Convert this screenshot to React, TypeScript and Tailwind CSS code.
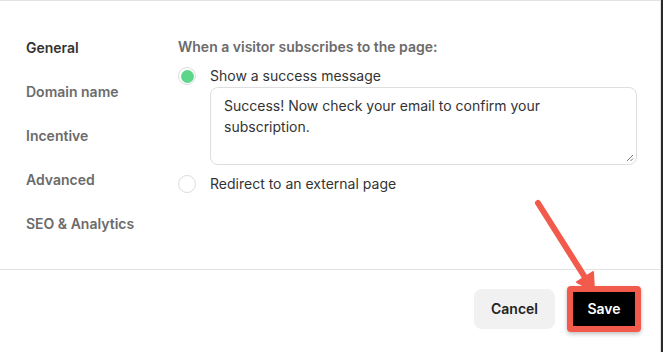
import React from 'react';

const NAV = ['General', 'Domain name', 'Incentive', 'Advanced', 'SEO & Analytics'];

export default function App() {
  return (
    <div
      className="relative flex h-[352px] w-[663px] overflow-hidden bg-white text-sm"
      style={{ fontFamily: 'Inter, "Noto Sans", sans-serif' }}
    >
      <div className="flex h-full w-[661px] flex-col border-r border-t border-[#e2e2e2]">
        {/* Body */}
        <div className="flex h-[269px] border-b border-[#e2e2e2]">
          <nav className="flex w-[178px] flex-col gap-6 pl-[26px] pt-[37px] font-semibold leading-5 text-[#6b6b6b]">
            {NAV.map((n, i) => (
              <span key={n} className={i === 0 ? 'text-[#333]' : ''}>
                {n}
              </span>
            ))}
          </nav>
          <div className="flex flex-col pt-[36px]">
            <p className="font-semibold leading-5 text-[#6b6b6b]">When a visitor subscribes to the page:</p>
            <label className="mt-[9px] flex items-center gap-[14px] leading-5 text-[#333]">
              <Radio checked />
              Show a success message
            </label>
            <div className="relative ml-[32px] mt-[1px] h-[78px] w-[427px] rounded-lg border border-[#dedede] bg-white">
              <p className="px-[13px] pt-[7px] leading-[21px] text-[#333]">
                Success! Now check your email to confirm your subscription.
              </p>
              <svg className="absolute bottom-[2px] right-[2px]" width="8" height="8" viewBox="0 0 8 8">
                <path d="M7 1L1 7M7 4.5L4.5 7" stroke="#777" strokeWidth="1" />
              </svg>
            </div>
            <label className="mt-[9px] flex items-center gap-[14px] leading-5 text-[#333]">
              <Radio />
              Redirect to an external page
            </label>
          </div>
        </div>

        {/* Footer */}
        <div className="flex flex-1 items-center justify-end pb-[4px] pr-[19px]">
          <button
            type="button"
            className="h-[40px] w-[81px] rounded-lg bg-[#f1f1f1] font-semibold text-[#222]"
          >
            Cancel
          </button>
          <span className="ml-[12px] rounded-[4px] bg-[#f25a4c] p-[6px] shadow-[0_2px_4px_rgba(0,0,0,0.25)]">
            <button type="button" className="block h-[34px] w-[62px] bg-black font-semibold text-white">
              Save
            </button>
          </span>
        </div>
      </div>
      <div className="h-full flex-1 bg-[#2a2a2a]" />

      {/* Annotation arrow */}
      <svg className="pointer-events-none absolute left-0 top-0" width="663" height="352">
        <line x1="538" y1="203" x2="586" y2="279" stroke="#f25a4c" strokeWidth="6" strokeLinecap="round" />
        <polygon points="594,291 577,282 593,272" fill="#f25a4c" stroke="#f25a4c" strokeWidth="2" strokeLinejoin="round" />
      </svg>
    </div>
  );
}

function Radio({ checked = false }: { checked?: boolean }) {
  return (
    <span className="flex h-[18px] w-[18px] items-center justify-center rounded-full border border-[#dcdcdc] bg-white">
      {checked ? <span className="h-[13px] w-[13px] rounded-full bg-[#5ed68a]" /> : null}
    </span>
  );
}
